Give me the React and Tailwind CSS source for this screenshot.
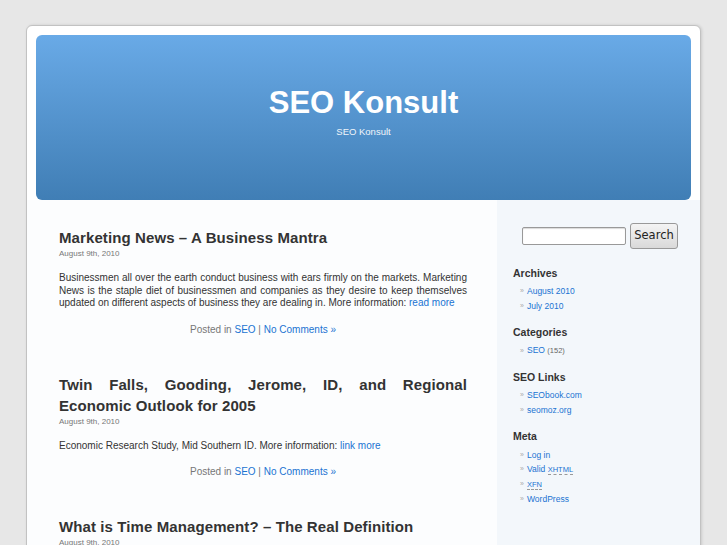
export default function App() {
  const font = { fontFamily: '"Liberation Sans", Arial, sans-serif' };
  const Link = ({ children }) => <a className="text-[#1a73d2] no-underline">{children}</a>;
  const Post = ({ title, date, children, last }) => (
    <div className={last ? "" : "mb-[38px]"}>
      <h2 className="text-[15px] leading-[21px] font-bold text-[#333] tracking-[0.1px] text-justify">{title}</h2>
      <div className="text-[8px] leading-[12px] text-[#777]">{date}</div>
      {children && (
        <>
          <p className="text-[10px] leading-[12.5px] text-[#333] text-justify mt-[12px]">{children}</p>
          <div className="text-[10px] leading-[13px] text-[#777] text-center mt-[13px]">
            Posted in <Link>SEO</Link> | <Link>No Comments »</Link>
          </div>
        </>
      )}
    </div>
  );
  const Item = ({ children }) => (
    <li className="flex items-center text-[8.5px] leading-[12px] h-[14.7px]">
      <span className="text-[#aaa] w-[7px] text-[7px]">»</span>
      <span>{children}</span>
    </li>
  );
  const Head = ({ children, first }) => (
    <h3 className={`text-[10.5px] font-bold text-[#333] leading-[13px] mb-[4px] ${first ? "" : "mt-[13px]"}`}>{children}</h3>
  );
  return (
    <div className="min-h-[545px] bg-[#e7e7e7] pt-[25px] overflow-hidden" style={font}>
      <div className="w-[675px] mx-auto bg-white border border-[#c2c2c2] rounded-t-[6px] shadow-[1px_0_3px_rgba(0,0,0,0.12)] h-[530px] overflow-hidden flex flex-col">
        <div className="pt-[9px] px-[9px]">
          <div className="h-[165px] rounded-[6px] bg-gradient-to-b from-[#69aae7] to-[#407eb5] flex flex-col items-center text-white">
            <h1 className="text-[31px] font-bold leading-[36px] mt-[50px]">SEO Konsult</h1>
            <div className="text-[9.5px] leading-[12px] mt-[5px] text-[#f0f5fa]">SEO Konsult</div>
          </div>
        </div>
        <div className="flex flex-1">
          <div className="w-[470px] bg-[#fcfdfe] pl-[32px] pr-[30px] pt-[27px]">
            <Post title="Marketing News – A Business Mantra" date="August 9th, 2010">
              Businessmen all over the earth conduct business with ears firmly on the markets. Marketing News is the staple diet of businessmen and companies as they desire to keep themselves updated on different aspects of business they are dealing in. More information: <Link>read more</Link>
            </Post>
            <Post title="Twin Falls, Gooding, Jerome, ID, and Regional Economic Outlook for 2005" date="August 9th, 2010">
              Economic Research Study, Mid Southern ID. More information: <Link>link more</Link>
            </Post>
            <Post title="What is Time Management? – The Real Definition" date="August 9th, 2010" last />
          </div>
          <div className="flex-1 bg-[#f3f7fb] pl-[16px] pt-[23px]">
            <div className="flex items-center ml-[9px] mb-[18px]">
              <input className="w-[104px] h-[18px] bg-white border border-[#999] rounded-[2px] shadow-[inset_0_1px_1px_rgba(0,0,0,0.15)]" />
              <button className="ml-[4px] w-[48px] h-[26px] rounded-[3px] border border-[#999] bg-gradient-to-b from-[#f4f4f4] to-[#d9d9d9] text-[11.5px] text-[#222]" style={{ fontFamily: '"DejaVu Sans", sans-serif' }}>Search</button>
            </div>
            <Head first>Archives</Head>
            <ul className="pl-[7px]">
              <Item><Link>August 2010</Link></Item>
              <Item><Link>July 2010</Link></Item>
            </ul>
            <Head>Categories</Head>
            <ul className="pl-[7px]">
              <Item><Link>SEO</Link>&nbsp;<span className="text-[#666] text-[7.5px]">(152)</span></Item>
            </ul>
            <Head>SEO Links</Head>
            <ul className="pl-[7px]">
              <Item><Link>SEObook.com</Link></Item>
              <Item><Link>seomoz.org</Link></Item>
            </ul>
            <Head>Meta</Head>
            <ul className="pl-[7px]">
              <Item><Link>Log in</Link></Item>
              <Item><Link>Valid <abbr className="text-[7.5px] no-underline border-b border-dashed border-[#999]">XHTML</abbr></Link></Item>
              <Item><Link><abbr className="text-[7.5px] no-underline border-b border-dashed border-[#999]">XFN</abbr></Link></Item>
              <Item><Link>WordPress</Link></Item>
            </ul>
          </div>
        </div>
      </div>
    </div>
  );
}
